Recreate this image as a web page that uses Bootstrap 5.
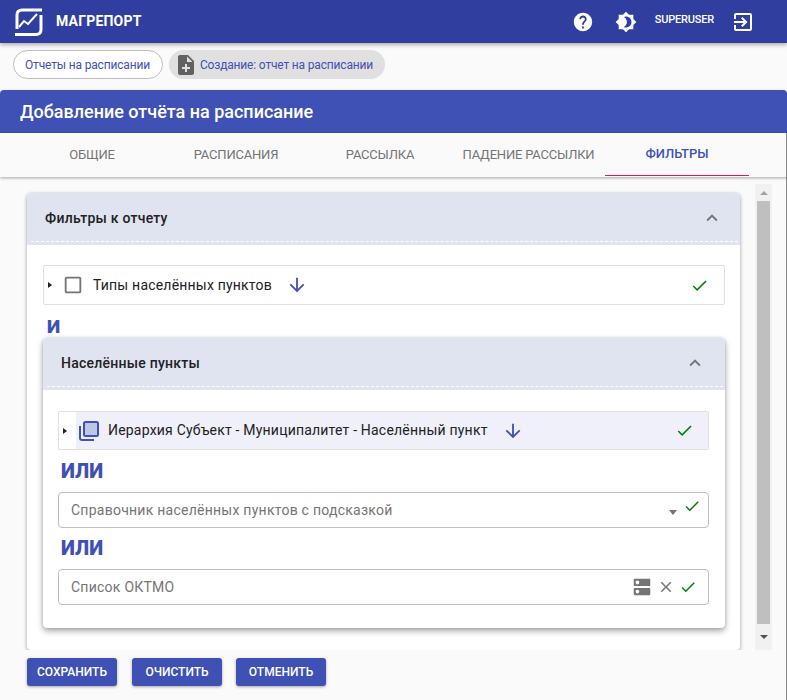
<!DOCTYPE html>
<html lang="ru">
<head>
  <meta charset="UTF-8">
  <meta name="viewport" content="width=device-width, initial-scale=1.0">
  <title>Магрепорт</title>
  <link rel="stylesheet" href="https://cdn.jsdelivr.net/npm/bootstrap@5.3.2/dist/css/bootstrap.min.css">
  <style>
    html, body { height: 100%; overflow: hidden; }
    body { background: #fafafa; font-family: Roboto, "Liberation Sans", sans-serif; font-size: 14px; color: #212121; }
    svg { display: block; flex: none; fill: currentColor; }

    .app-bar { height: 43px; padding: 0 0 0 15px; background: #303f9f; color: #fff; box-shadow: 0 2px 4px rgba(0,0,0,.3); position: relative; z-index: 3; flex-wrap: nowrap; }
    .app-name { font-size: 14px; font-weight: 700; letter-spacing: .2px; margin-left: 13px; }
    .app-user { font-size: 11px; font-weight: 500; letter-spacing: -.2px; margin: 0 17px 3px 18px; }
    .bar-gap { margin-left: 21px; }
    .bar-end { margin-right: 32px; }

    .crumbs { padding: 7px 13px 11px; gap: 6px; }
    .crumb { height: 29px; border-radius: 15px; color: #3f51b5; font-size: 12px; letter-spacing: -.17px; display: flex; align-items: center; }
    .crumb-link { border: 1px solid #bdbdbd; padding: 0 12px 0 11px; background: #fff; }
    .crumb-now { background: #e0e0e0; padding: 0 12px 0 5px; }
    .crumb-now svg { color: #616161; margin-right: 2px; }

    .title-bar { height: 43px; background: #3f51b5; color: #fff; border-radius: 4px 4px 0 0; padding: 0 0 1px 20px; font-size: 18px; font-weight: 500; box-shadow: 0 2px 4px rgba(0,0,0,.3); position: relative; z-index: 2; }

    .tab-row { height: 44px; padding-left: 20px; border-right: 1px solid #8a8a8a; box-shadow: 0 1px 3px rgba(0,0,0,.35); position: relative; z-index: 2; flex-wrap: nowrap; background: #fafafa; }
    .tab-row .nav-link { width: 144px; height: 43px; padding: 0; color: #757575; font-size: 13px; font-weight: 400; letter-spacing: -.2px; display: flex; align-items: center; justify-content: center; }
    .tab-row .nav-link.wide { width: 153px; }
    .tab-row .nav-link.active { color: #3f51b5; font-weight: 500; letter-spacing: 0; border-bottom: 1px solid #d81b60; }

    .lower-part { border-right: 1px solid #8a8a8a; }
    .scroll-zone { height: 473px; overflow: hidden; padding-left: 27px; }
    .outer-col { width: 713px; padding-top: 16px; flex: none; }
    .pane { border: 0; border-radius: 4px; background: #fff; box-shadow: 0 2px 4px rgba(0,0,0,.28), 0 0 3px rgba(0,0,0,.12); }
    .pane-outer { height: 457px; }
    .pane-head { height: 52px; background: #e0e3f0; border: 0; border-radius: 4px 4px 0 0 !important; padding: 0 18px 2px; position: relative; font-size: 14px; font-weight: 500; letter-spacing: .25px; color: #212121; }
    .pane-head::after { content: ""; position: absolute; left: 4px; right: 2px; bottom: 3px; border-top: 1px dashed #fff; }
    .pane-head svg { color: #757575; margin-right: -1px; }
    .pane-body { padding: 20px 15px 0 16px; }
    .pane-inner { height: 290px; box-shadow: 0 3px 6px rgba(0,0,0,.35), 0 0 3px rgba(0,0,0,.15); }
    .pane-inner .pane-head svg { margin-right: 1px; }
    .pane-inner .pane-body { padding: 21px 16px 0 15px; }

    .tree-row { height: 40px; border: 1px solid #e0e0e0; border-radius: 2px; padding: 0 15px 0 4px; font-size: 14px; letter-spacing: .2px; color: #212121; background: #fff; }
    .tree-row .label-box { display: flex; align-items: center; height: 100%; flex: 1; }
    .tree-row.picked { padding: 0; height: 39px; }
    .tree-row.picked .label-box { background: #eff0f9; margin-left: 17px; padding-right: 14px; }
    .tree-caret { width: 0; height: 0; border-left: 4px solid #212121; border-top: 3px solid transparent; border-bottom: 3px solid transparent; }
    .tree-row.picked .tree-caret { margin: 0 -8px 0 4px; }
    .check-box { color: #757575; margin: 0 9px 0 10px; }
    .stack-box { margin: 0 8px 0 2px; }
    .arrow-down { color: #3f51b5; margin-left: 14px; }
    .tick { color: #008000; }
    .and-word { font-size: 19px; font-weight: 900; color: #3f51b5; line-height: 23px; margin-top: 10px; padding-left: 4px; }
    .or-word { font-size: 20px; font-weight: 900; color: #3f51b5; line-height: 42px; height: 42px; padding-left: 3px; }
    .or-word.short { height: 41px; line-height: 41px; }

    .fake-field { height: 36px; border: 1px solid #bdbdbd; border-radius: 4px; padding: 0 8px 0 12px; color: #757575; font-size: 14px; letter-spacing: .25px; }
    .fake-field.with-caret { padding-right: 7px; }
    .fake-field svg.grey { color: #757575; }
    .drop-caret { width: 0; height: 0; border-left: 4.500px solid transparent; border-right: 4.500px solid transparent; border-top: 5px solid #757575; margin: 4px 6px 0 0; }

    .scroll-track { width: 17px; height: 466px; margin: 7px 0 0 15px; background: #f1f1f1; flex: none; display: flex; flex-direction: column; align-items: center; }
    .scroll-thumb { width: 13px; flex: 1; background: #bfbfbf; }
    .scroll-btn { height: 17px; display: flex; align-items: center; justify-content: center; flex: none; }
    .scroll-btn.up i { border-left: 4px solid transparent; border-right: 4px solid transparent; border-bottom: 4px solid #a3a3a3; }
    .scroll-btn.down { height: 26px; }
    .scroll-btn.down i { border-left: 4px solid transparent; border-right: 4px solid transparent; border-top: 4px solid #505050; }
    .scroll-btn i { width: 0; height: 0; display: block; }

    .actions { padding: 8px 0 0 27px; gap: 14px; height: 50px; }
    .act-btn { width: 90px; height: 28px; padding: 0; background: #3f51b5; border: 0; border-radius: 3px; color: #fff; font-size: 12px; font-weight: 500; box-shadow: 0 1px 3px rgba(0,0,0,.35); }
    .act-btn:first-child { margin-right: 1px; }
    .act-btn:hover { background: #3f51b5; color: #fff; }
  </style>
</head>
<body>
  <!-- Top bar -->
  <nav class="navbar app-bar d-flex align-items-center">
    <svg width="28" height="28" viewBox="0 0 28 28" style="fill:none" stroke="#fff" stroke-width="3">
      <path d="M27 2H7Q2 2 2 7V21"/>
      <path d="M0 26.500H21Q26 26.500 26 21.500V7"/>
      <path d="M4 19L9 13L13 16L22 6" stroke-width="2"/>
    </svg>
    <span class="app-name me-auto">МАГРЕПОРТ</span>
    <svg width="22" height="22" viewBox="0 0 24 24"><path d="M12 2C6.48 2 2 6.48 2 12s4.48 10 10 10 10-4.48 10-10S17.52 2 12 2zm1 17h-2v-2h2v2zm2.07-7.750l-.9.92C13.450 12.900 13 13.500 13 15h-2v-.5c0-1.100.45-2.100 1.170-2.830l1.240-1.260c.37-.36.59-.86.59-1.410 0-1.100-.9-2-2-2s-2 .9-2 2H8c0-2.210 1.790-4 4-4s4 1.790 4 4c0 .88-.36 1.680-.93 2.250z"/></svg>
    <svg class="bar-gap" width="22" height="22" viewBox="0 0 24 24"><path d="M20 8.690V4h-4.690L12 .69 8.690 4H4v4.690L.69 12 4 15.310V20h4.690L12 23.310 15.310 20H20v-4.690L23.310 12 20 8.690zM12 18c-.89 0-1.740-.2-2.500-.55C11.560 16.500 13 14.420 13 12s-1.440-4.500-3.500-5.450C10.260 6.200 11.110 6 12 6c3.310 0 6 2.690 6 6s-2.690 6-6 6z"/></svg>
    <span class="app-user">SUPERUSER</span>
    <svg class="bar-end" width="24" height="24" viewBox="0 0 24 24"><path d="M10.090 15.590L11.500 17l5-5-5-5-1.410 1.410L12.670 11H3v2h9.670l-2.580 2.590zM19 3H5c-1.110 0-2 .9-2 2v4h2V5h14v14H5v-4H3v4c0 1.100.89 2 2 2h14c1.100 0 2-.9 2-2V5c0-1.100-.9-2-2-2z"/></svg>
  </nav>

  <!-- Breadcrumb chips -->
  <div class="crumbs d-flex">
    <a class="crumb crumb-link text-decoration-none">Отчеты на расписании</a>
    <div class="crumb crumb-now">
      <svg width="24" height="24" viewBox="0 0 24 24"><path d="M14 2H6c-1.100 0-1.990.9-1.990 2L4 20c0 1.100.89 2 1.990 2H18c1.100 0 2-.9 2-2V8l-6-6zm2 14h-3v3h-2v-3H8v-2h3v-3h2v3h3v2zm-3-7V3.500L18.500 9H13z"/></svg>
      Создание: отчет на расписании
    </div>
  </div>

  <div class="title-bar d-flex align-items-center">Добавление отчёта на расписание</div>

  <ul class="nav tab-row">
    <li class="nav-item"><a class="nav-link">ОБЩИЕ</a></li>
    <li class="nav-item"><a class="nav-link">РАСПИСАНИЯ</a></li>
    <li class="nav-item"><a class="nav-link">РАССЫЛКА</a></li>
    <li class="nav-item"><a class="nav-link wide">ПАДЕНИЕ РАССЫЛКИ</a></li>
    <li class="nav-item"><a class="nav-link active">ФИЛЬТРЫ</a></li>
  </ul>

  <div class="lower-part">
    <!-- Filters -->
    <div class="scroll-zone d-flex">
      <div class="outer-col">
        <div class="card pane pane-outer">
          <div class="card-header pane-head d-flex align-items-center justify-content-between">
            <span>Фильтры к отчету</span>
            <svg width="22" height="22" viewBox="0 0 24 24"><path d="M12 8l-6 6 1.410 1.410L12 10.830l4.590 4.580L18 14z"/></svg>
          </div>
          <div class="pane-body">
            <div class="tree-row d-flex align-items-center">
              <span class="tree-caret"></span>
              <svg class="check-box" width="22" height="22" viewBox="0 0 24 24"><path d="M19 5v14H5V5h14m0-2H5c-1.100 0-2 .9-2 2v14c0 1.100.9 2 2 2h14c1.100 0 2-.9 2-2V5c0-1.100-.9-2-2-2z"/></svg>
              <span>Типы населённых пунктов</span>
              <svg class="arrow-down me-auto" width="22" height="22" viewBox="0 0 24 24"><path d="M20 12l-1.410-1.410L13 16.170V4h-2v12.170l-5.580-5.590L4 12l8 8 8-8z"/></svg>
              <svg class="tick" width="19" height="19" viewBox="0 0 24 24"><path d="M9 16.170L4.830 12l-1.420 1.410L9 19 21 7l-1.410-1.410z"/></svg>
            </div>
            <div class="and-word">И</div>

            <div class="card pane pane-inner">
              <div class="card-header pane-head d-flex align-items-center justify-content-between">
                <span>Населённые пункты</span>
                <svg width="22" height="22" viewBox="0 0 24 24"><path d="M12 8l-6 6 1.410 1.410L12 10.830l4.590 4.580L18 14z"/></svg>
              </div>
              <div class="pane-body">
                <div class="tree-row picked d-flex align-items-center">
                  <span class="tree-caret"></span>
                  <div class="label-box">
                    <svg class="stack-box" width="22" height="22" viewBox="0 0 22 22" style="fill:none">
                      <rect x="6" y="2" width="14" height="14" rx="1.500" fill="#c0c5e6" stroke="#3f51b5" stroke-width="2"/>
                      <path d="M2 6V18Q2 20 4 20H16" stroke="#3f51b5" stroke-width="2"/>
                    </svg>
                    <span>Иерархия Субъект - Муниципалитет - Населённый пункт</span>
                    <svg class="arrow-down me-auto" width="22" height="22" viewBox="0 0 24 24"><path d="M20 12l-1.410-1.410L13 16.170V4h-2v12.170l-5.580-5.590L4 12l8 8 8-8z"/></svg>
                    <svg class="tick" width="19" height="19" viewBox="0 0 24 24"><path d="M9 16.170L4.830 12l-1.420 1.410L9 19 21 7l-1.410-1.410z"/></svg>
                  </div>
                </div>
                <div class="or-word">ИЛИ</div>
                <div class="fake-field with-caret d-flex align-items-center">
                  <span class="me-auto">Справочник населённых пунктов с подсказкой</span>
                  <span class="drop-caret"></span>
                  <svg class="tick mb-2" width="18" height="18" viewBox="0 0 24 24"><path d="M9 16.170L4.830 12l-1.420 1.410L9 19 21 7l-1.410-1.410z"/></svg>
                </div>
                <div class="or-word short">ИЛИ</div>
                <div class="fake-field d-flex align-items-center">
                  <span class="me-auto">Список ОКТМО</span>
                  <svg class="grey" width="22" height="22" viewBox="0 0 24 24"><path d="M20 13H4c-.55 0-1 .45-1 1v6c0 .55.45 1 1 1h16c.55 0 1-.45 1-1v-6c0-.55-.45-1-1-1zM7 19c-1.100 0-2-.9-2-2s.9-2 2-2 2 .9 2 2-.9 2-2 2zM20 3H4c-.55 0-1 .45-1 1v6c0 .55.45 1 1 1h16c.55 0 1-.45 1-1V4c0-.55-.45-1-1-1zM7 9c-1.100 0-2-.9-2-2s.9-2 2-2 2 .9 2 2-.9 2-2 2z"/></svg>
                  <svg class="grey ms-1" width="18" height="18" viewBox="0 0 24 24"><path d="M19 6.410L17.590 5 12 10.590 6.410 5 5 6.410 10.590 12 5 17.590 6.410 19 12 13.410 17.590 19 19 17.590 13.410 12z"/></svg>
                  <svg class="tick ms-1" style="margin-right:3px" width="18" height="18" viewBox="0 0 24 24"><path d="M9 16.170L4.830 12l-1.420 1.410L9 19 21 7l-1.410-1.410z"/></svg>
                </div>
              </div>
            </div>
          </div>
        </div>
      </div>
      <div class="scroll-track">
        <div class="scroll-btn up"><i></i></div>
        <div class="scroll-thumb"></div>
        <div class="scroll-btn down"><i></i></div>
      </div>
    </div>

    <div class="actions d-flex">
      <button class="btn act-btn">СОХРАНИТЬ</button>
      <button class="btn act-btn">ОЧИСТИТЬ</button>
      <button class="btn act-btn">ОТМЕНИТЬ</button>
    </div>
  </div>

  <script src="https://cdn.jsdelivr.net/npm/bootstrap@5.3.2/dist/js/bootstrap.bundle.min.js"></script>
</body>
</html>
